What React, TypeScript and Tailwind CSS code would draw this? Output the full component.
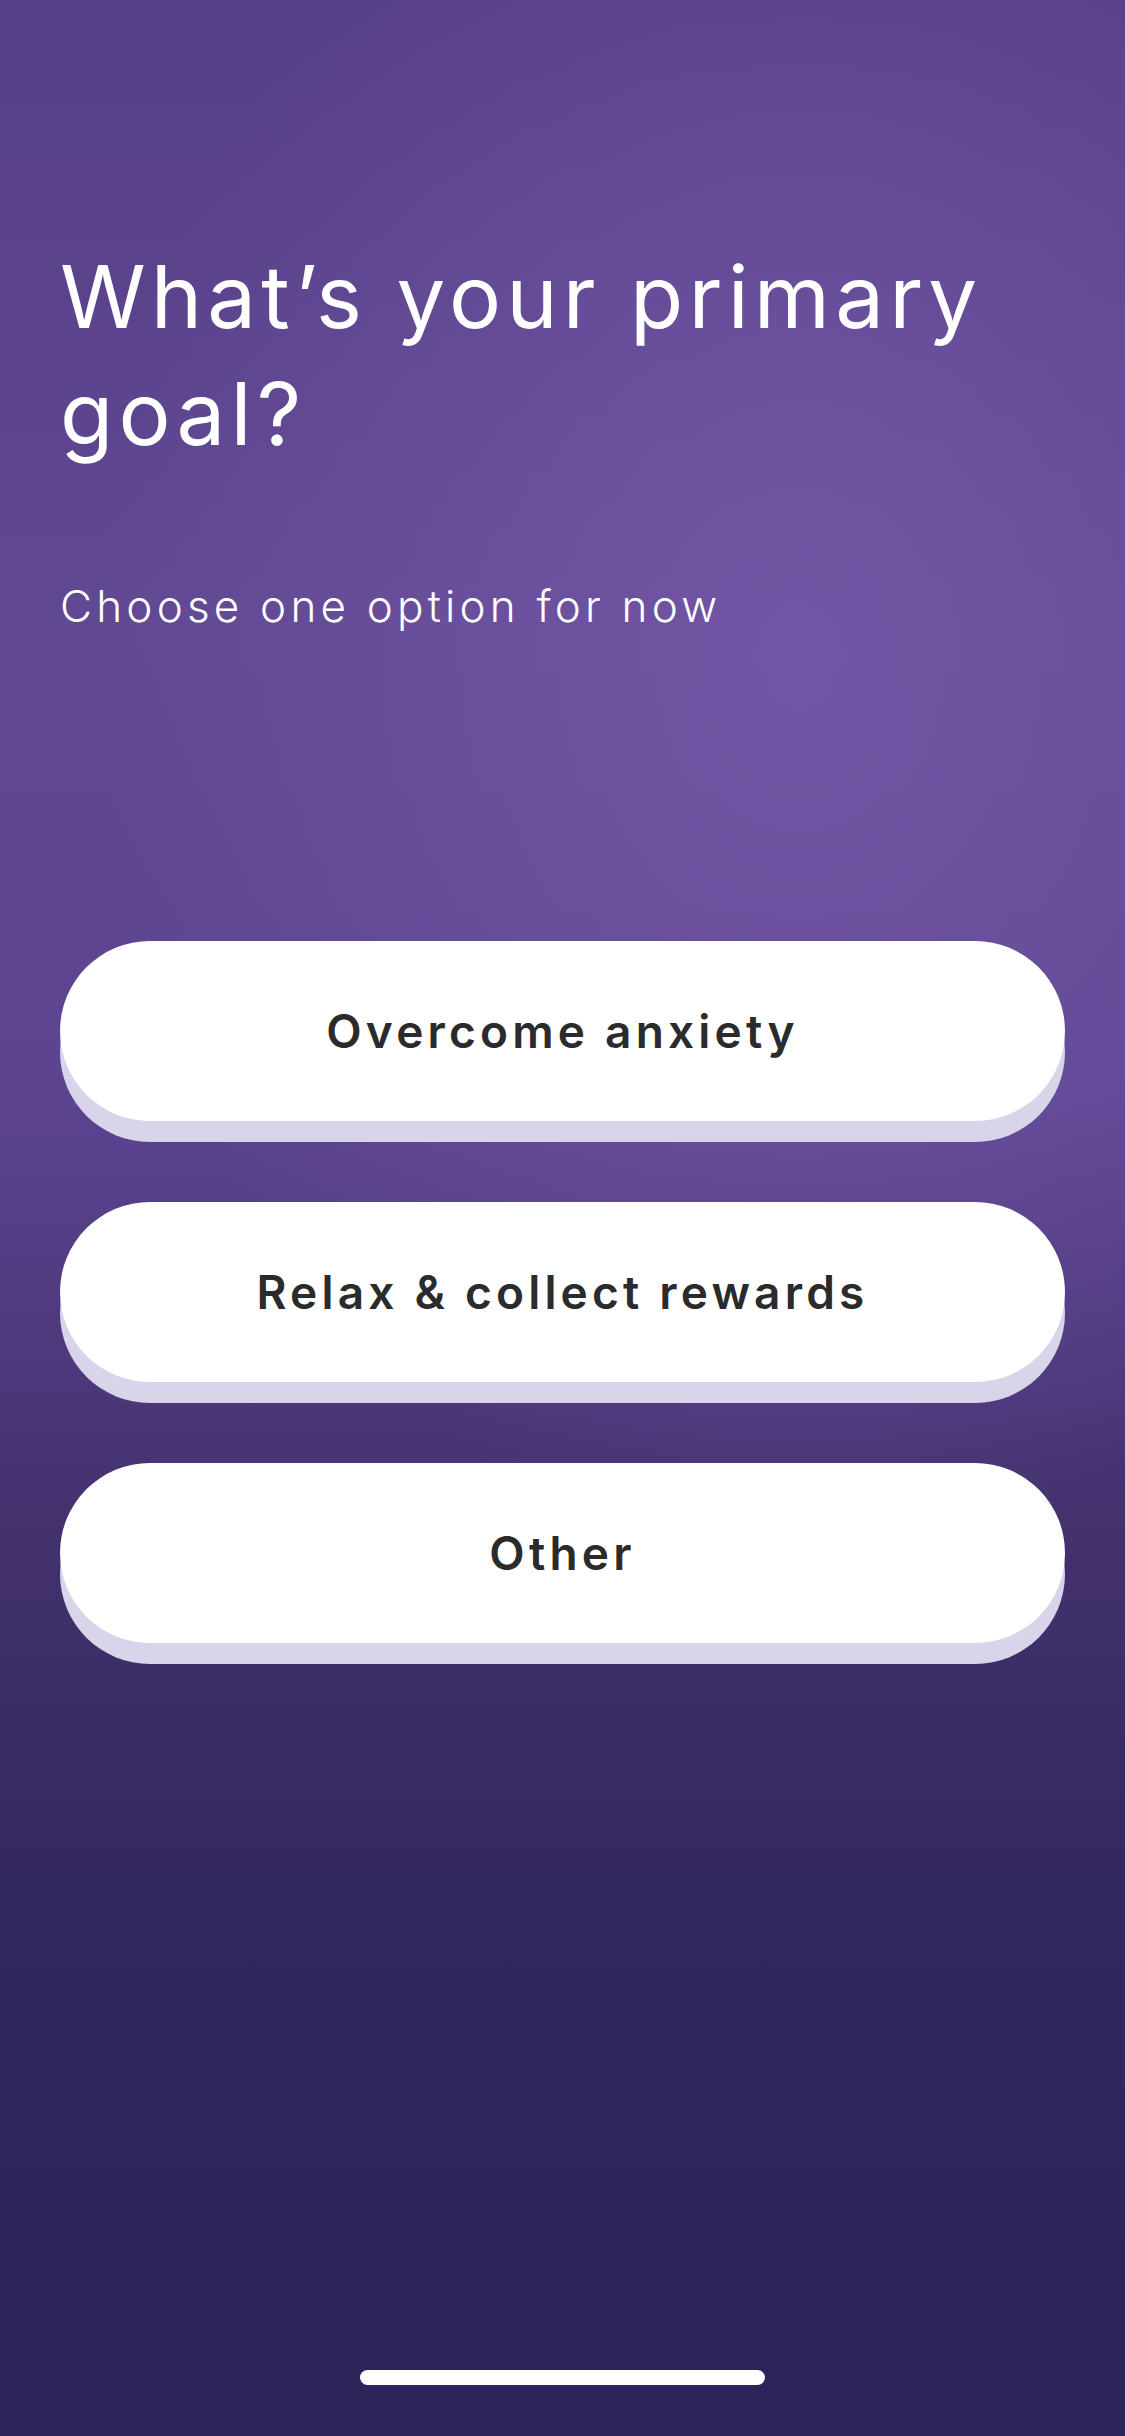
import React from 'react'

const options = ['Overcome anxiety', 'Relax & collect rewards', 'Other']

const GoalPage = () => {
   return (
      <div
         className="relative min-h-[2436px] w-full flex flex-col bg-[radial-gradient(ellipse_700px_900px_at_800px_660px,rgba(118,88,168,0.85),rgba(118,88,168,0)_100%),linear-gradient(180deg,#553f86_0%,#604892_25%,#5c4491_45%,#44326f_62%,#33275f_78%,#2c2358_100%)]"
         style={{ fontFamily: 'Inter, "Noto Sans", sans-serif' }}
      >
         <div className="px-[60px] pt-[238px]">
            <h1 className="text-white text-[87px] leading-[117px] font-normal tracking-[5.1px]">
               What’s your primary goal?
            </h1>
            <p className="mt-[106px] text-white text-[44px] leading-[56px] font-light tracking-[4.2px]">
               Choose one option for now
            </p>
         </div>

         <div className="px-[60px] mt-[307px] flex flex-col gap-[81px]">
            {options.map((opt) => (
               <button
                  key={opt}
                  className="h-[180px] w-full rounded-full bg-white shadow-[0_21px_0_#d8d4ea] flex items-center justify-center"
               >
                  <span className="text-[#2b2b2b] text-[46px] font-semibold tracking-[4.2px]">
                     {opt}
                  </span>
               </button>
            ))}
         </div>

         <div className="mt-auto pb-[51px] flex justify-center">
            <div className="h-[15px] w-[405px] rounded-full bg-white"></div>
         </div>
      </div>
   )
}

export default function App() {
   return <GoalPage />
}
